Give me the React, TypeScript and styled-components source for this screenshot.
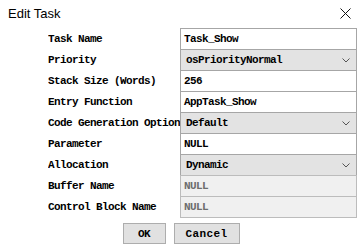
import React from 'react';
import styled, { createGlobalStyle } from 'styled-components';

const GlobalStyle = createGlobalStyle`
  html, body {
    margin: 0;
    padding: 0;
    background: #ffffff;
  }
`;

const Dialog = styled.div`
  width: 360px;
  height: 249px;
  background: #ffffff;
  display: flex;
  flex-direction: column;
  overflow: hidden;
`;

const TitleBar = styled.div`
  height: 26px;
  display: flex;
  align-items: center;
  justify-content: space-between;
  padding: 0 9px 0 8px;
  font-family: 'Liberation Sans', Arial, sans-serif;
  font-size: 13px;
  color: #000;
`;

const CloseButton = styled.div`
  width: 12px;
  height: 12px;
  display: flex;
  align-items: center;
  justify-content: center;
`;

const Form = styled.div`
  margin-top: 2px;
  display: grid;
  grid-template-columns: 132px 177px;
  grid-auto-rows: 21px;
  padding-left: 48px;
`;

const Label = styled.div`
  align-self: center;
  margin-top: 1px;
  font-family: 'Liberation Mono', 'Courier New', monospace;
  font-size: 11px;
  letter-spacing: -0.6px;
  font-weight: 700;
  color: #000;
  white-space: nowrap;
  overflow: hidden;
`;

const Field = styled.div<{ $kind?: 'text' | 'select' | 'disabled' }>`
  box-sizing: border-box;
  height: 22px;
  display: flex;
  align-items: center;
  justify-content: space-between;
  padding: 0 6px 0 ${({ $kind }) => ($kind === 'select' ? 5 : 3)}px;
  border: 1px solid ${({ $kind }) => ($kind === 'disabled' ? '#bcbcbc' : '#a6a6a6')};
  background: ${({ $kind }) =>
    $kind === 'select' ? '#e3e3e3' : $kind === 'disabled' ? '#f0f0f0' : '#ffffff'};
  color: ${({ $kind }) => ($kind === 'disabled' ? '#6d6d6d' : '#000')};
  font-family: 'Liberation Mono', 'Courier New', monospace;
  font-size: 11px;
  letter-spacing: -0.6px;
  font-weight: 700;
  white-space: nowrap;
`;

const Buttons = styled.div`
  display: flex;
  justify-content: center;
  gap: 8px;
  margin-top: 6px;
  padding-left: 2px;
`;

const Button = styled.div<{ $w: number }>`
  box-sizing: border-box;
  width: ${({ $w }) => $w}px;
  height: 21px;
  display: flex;
  align-items: center;
  justify-content: center;
  background: #e1e1e1;
  border: 1px solid #adadad;
  font-family: 'Liberation Mono', 'Courier New', monospace;
  font-size: 11px;
  font-weight: 700;
  letter-spacing: ${({ $w }) => ($w > 50 ? '0.4px' : '-0.6px')};
  color: #000;
`;

const Chevron = () => (
  <svg width="8" height="5" viewBox="0 0 8 5">
    <path d="M0.5 0.5 L4 4 L7.5 0.5" fill="none" stroke="#555" strokeWidth="1" />
  </svg>
);

type Row = { label: string; value: string; kind: 'text' | 'select' | 'disabled' };

const rows: Row[] = [
  { label: 'Task Name', value: 'Task_Show', kind: 'text' },
  { label: 'Priority', value: 'osPriorityNormal', kind: 'select' },
  { label: 'Stack Size (Words)', value: '256', kind: 'text' },
  { label: 'Entry Function', value: 'AppTask_Show', kind: 'text' },
  { label: 'Code Generation Option', value: 'Default', kind: 'select' },
  { label: 'Parameter', value: 'NULL', kind: 'text' },
  { label: 'Allocation', value: 'Dynamic', kind: 'select' },
  { label: 'Buffer Name', value: 'NULL', kind: 'disabled' },
  { label: 'Control Block Name', value: 'NULL', kind: 'disabled' },
];

export default function App() {
  return (
    <>
      <GlobalStyle />
      <Dialog>
        <TitleBar>
          <span>Edit Task</span>
          <CloseButton>
            <svg width="11" height="11" viewBox="0 0 11 11">
              <path d="M0.5 0.5 L10.5 10.5 M10.5 0.5 L0.5 10.5" stroke="#111" strokeWidth="1" />
            </svg>
          </CloseButton>
        </TitleBar>
        <Form>
          {rows.map((r) => (
            <React.Fragment key={r.label}>
              <Label>{r.label}</Label>
              <Field $kind={r.kind}>
                <span>{r.value}</span>
                {r.kind === 'select' && <Chevron />}
              </Field>
            </React.Fragment>
          ))}
        </Form>
        <Buttons>
          <Button $w={43}>OK</Button>
          <Button $w={66}>Cancel</Button>
        </Buttons>
      </Dialog>
    </>
  );
}
